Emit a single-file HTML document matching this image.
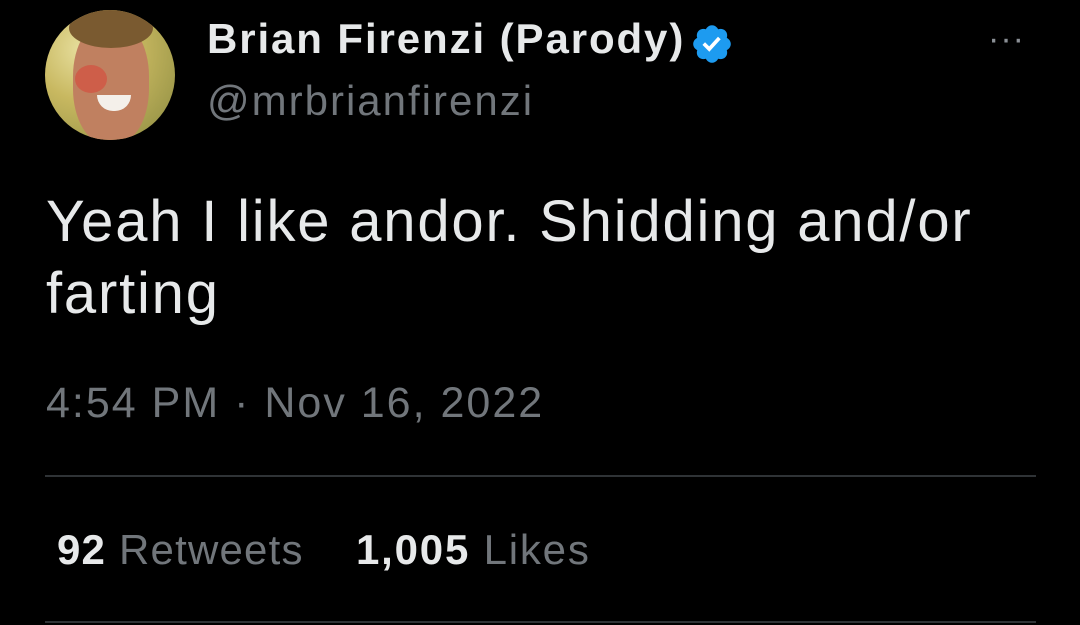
<!DOCTYPE html>
<html><head><meta charset="utf-8"><style>
html,body{margin:0;padding:0;background:#000;width:1080px;height:625px;overflow:hidden;font-family:"Liberation Sans",Arial,sans-serif;}
.abs{position:absolute;white-space:nowrap;}
</style></head><body>
<div class="abs" style="left:45px;top:10px;width:130px;height:130px;border-radius:50%;background:radial-gradient(circle at 30% 30%,#e8e0a0 0%,#c8b860 40%,#8a8a40 100%);overflow:hidden">
  <div style="position:absolute;left:28px;top:10px;width:76px;height:125px;border-radius:45%;background:#c08060"></div>
  <div style="position:absolute;left:24px;top:-2px;width:84px;height:40px;border-radius:50%;background:#7a5a30"></div>
  <div style="position:absolute;left:30px;top:55px;width:32px;height:28px;border-radius:50%;background:rgba(220,60,50,.5)"></div>
  <div style="position:absolute;left:52px;top:85px;width:34px;height:16px;border-radius:0 0 17px 17px;background:#f4f0ea"></div>
</div>
<div class="abs" style="left:207px;top:15px;font-size:42px;font-weight:bold;color:#e7e9ea;letter-spacing:1.9px">Brian Firenzi (Parody)</div>
<svg class="abs" style="left:690px;top:22px" width="44" height="44" viewBox="0 0 24 24"><path fill="#1d9bf0" d="M22.25 12c0-1.43-.88-2.67-2.19-3.34.46-1.39.2-2.9-.81-3.91s-2.520-1.27-3.91-.81c-.66-1.31-1.91-2.19-3.34-2.19s-2.67.88-3.33 2.19c-1.4-.46-2.91-.2-3.92.81s-1.26 2.52-.8 3.91c-1.31.67-2.2 1.91-2.2 3.34s.89 2.67 2.2 3.34c-.46 1.39-.21 2.9.8 3.91s2.52 1.26 3.91.81c.67 1.31 1.91 2.19 3.34 2.19s2.68-.88 3.34-2.19c1.39.45 2.9.2 3.91-.81s1.27-2.52.81-3.91c1.31-.67 2.190-1.91 2.19-3.34z"/><path fill="#fff" d="M10.54 16.2l-3.74-3.74 1.41-1.42 2.26 2.26 4.8-5.23 1.47 1.36z"/></svg>
<div class="abs" style="left:988px;top:20px;font-size:34px;color:#8b9096;letter-spacing:1px">···</div>
<div class="abs" style="left:207px;top:77px;font-size:42px;color:#71767b;letter-spacing:2px">@mrbrianfirenzi</div>
<div class="abs" style="left:46px;top:186px;font-size:58px;color:#e7e9ea;line-height:72px;letter-spacing:1.8px">Yeah I like andor. Shidding and/or<br>farting</div>
<div class="abs" style="left:46px;top:379px;font-size:43px;color:#71767b;letter-spacing:2px">4:54 PM · Nov 16, 2022</div>
<div class="abs" style="left:45px;top:475px;width:991px;height:2px;background:#2f3336"></div>
<div class="abs" style="left:57px;top:526px;font-size:42px;color:#71767b;letter-spacing:1.2px"><b style="color:#e7e9ea">92</b> Retweets</div>
<div class="abs" style="left:356px;top:526px;font-size:42px;color:#71767b;letter-spacing:1.8px"><b style="color:#e7e9ea">1,005</b> Likes</div>
<div class="abs" style="left:45px;top:621px;width:991px;height:2px;background:#2f3336"></div>
</body></html>
